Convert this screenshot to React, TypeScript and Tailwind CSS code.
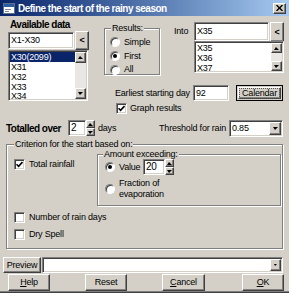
// App.tsx — Win2000-style dialog: "Define the start of the rainy season"

const sunken =
  "border border-t-[#808080] border-l-[#808080] border-b-white border-r-white shadow-[inset_1px_1px_0_#404040,inset_-1px_-1px_0_#d4d0c8] bg-white";
const raised =
  "border border-t-white border-l-white border-b-[#404040] border-r-[#404040] shadow-[inset_-1px_-1px_0_#808080] bg-[#d4d0c8]";
const groupBox =
  "border border-[#808080] shadow-[1px_1px_0_#fff,inset_1px_1px_0_#fff]";

const Arrow = ({ dir, size = 5 }: { dir: "up" | "down"; size?: number }) => (
  <svg width={size * 2 - 1} height={size} viewBox={`0 0 ${size * 2 - 1} ${size}`}>
    {dir === "up" ? (
      <polygon points={`${size - 1},0 ${size * 2 - 1},${size} 0,${size}`} fill="#000" />
    ) : (
      <polygon points={`0,0 ${size * 2 - 1},0 ${size - 1},${size}`} fill="#000" />
    )}
  </svg>
);

const ArrowBtn = ({ dir, className = "" }: { dir: "up" | "down"; className?: string }) => (
  <div className={`${raised} flex items-center justify-center ${className}`}>
    <Arrow dir={dir} size={3} />
  </div>
);

const Scrollbar = ({ btn }: { btn: string }) => (
  <div className="flex flex-col w-[11px] h-full">
    <ArrowBtn dir="up" className={btn} />
    <div className="flex-1 bg-[#e9e7e3]" />
    <ArrowBtn dir="down" className={btn} />
  </div>
);

const Check = ({ checked }: { checked?: boolean }) => (
  <div className={`${sunken} w-[11px] h-[11px] flex items-center justify-center shrink-0`}>
    {checked && (
      <svg width="7" height="7" viewBox="0 0 7 7">
        <path d="M0.5 3.2 L2.6 5.3 L6.5 1" stroke="#000" strokeWidth="1.6" fill="none" />
      </svg>
    )}
  </div>
);

const Radio = ({ on }: { on?: boolean }) => (
  <div className="w-[10px] h-[10px] rounded-full border border-t-[#808080] border-l-[#808080] border-b-white border-r-white bg-white shadow-[inset_1px_1px_0_#404040] flex items-center justify-center shrink-0">
    {on && <div className="w-[4px] h-[4px] rounded-full bg-black" />}
  </div>
);

const Spin = ({ value, w }: { value: string; w: string }) => (
  <div className="flex h-[16px]">
    <div className={`${sunken} ${w} h-[16px] pl-[2px] leading-[14px] text-[10px]`}>{value}</div>
    <div className="flex flex-col w-[9px] h-[16px]">
      <ArrowBtn dir="up" className="h-[8px]" />
      <ArrowBtn dir="down" className="h-[8px]" />
    </div>
  </div>
);

export default function App() {
  return (
    <div className="w-[289px] h-[293px] bg-[#d4d0c8] overflow-hidden flex flex-col text-[9px] tracking-[-0.2px] leading-[11px] whitespace-nowrap text-black font-['Liberation_Sans',Arial,sans-serif] border-b border-b-[#404040] shadow-[inset_0_-1px_0_#808080]">
      {/* title bar */}
      <div className="h-[16px] shrink-0 flex items-center bg-linear-to-r from-[#0a246a] to-[#a6caf0] pl-[3px]">
        <svg width="12" height="11" viewBox="0 0 12 11">
          <rect x="0.5" y="0.5" width="11" height="10" fill="#fff" stroke="#5a6f8a" />
          <rect x="1" y="1" width="10" height="3" fill="#2c5d9e" />
          <rect x="2" y="6" width="6" height="1" fill="#7b8ca0" />
          <rect x="2" y="8" width="4" height="1" fill="#7b8ca0" />
        </svg>
        <span className="ml-[3px] text-white font-bold text-[10px] tracking-[-0.5px]">Define the start of the rainy season</span>
        <div className={`${raised} ml-auto mr-[3px] w-[13px] h-[11px] flex items-center justify-center`}>
          <svg width="7" height="6" viewBox="0 0 7 6">
            <path d="M0.5 0 L6.5 6 M6.5 0 L0.5 6" stroke="#000" strokeWidth="1.4" />
          </svg>
        </div>
      </div>

      {/* data selection */}
      <div className="h-[102px] shrink-0 flex">
        <div className="ml-[8px] w-[81px] flex flex-col">
          <div className="h-[15px] pt-[3px] font-bold text-[10px] tracking-[-0.5px] leading-[12px] pl-[2px]">Available data</div>
          <div className="h-[19px] flex items-start">
            <div className={`${sunken} w-[66px] h-[17px] mt-[1px] pl-[2px] leading-[15px]`}>X1-X30</div>
            <div className={`${raised} ml-[1px] w-[14px] h-[19px] flex items-center justify-center font-bold`}>&lt;</div>
          </div>
          <div className={`${sunken} w-[80px] h-[51px] flex p-[1px]`}>
            <div className="flex-1 flex flex-col leading-[10px]">
              <div className="h-[10px] bg-[#0a246a] text-white pl-[1px]">X30(2099)</div>
              <div className="h-[10px] pl-[1px]">X31</div>
              <div className="h-[10px] pl-[1px]">X32</div>
              <div className="h-[10px] pl-[1px]">X33</div>
              <div className="h-[9px] pl-[1px] leading-[9px]">X34</div>
            </div>
            <Scrollbar btn="h-[11px]" />
          </div>
        </div>

        <div className="ml-[15px] w-[180px] flex flex-col">
          <div className="h-[59px] flex">
            <fieldset className={`${groupBox} mt-[6px] w-[56px] h-[53px]`}>
              <legend className="ml-[6px] px-[1px] bg-[#d4d0c8] leading-[12px]">Results:</legend>
              <div className="flex flex-col pl-[5px] pt-[1px]">
                <div className="h-[14px] flex items-center gap-[4px]"><Radio />Simple</div>
                <div className="h-[14px] flex items-center gap-[4px]"><Radio on />First</div>
                <div className="h-[13px] flex items-center gap-[4px]"><Radio />All</div>
              </div>
            </fieldset>
            <div className="ml-[14px] w-[110px] flex flex-col">
              <div className="mt-[6px] flex items-start">
                <div className="w-[20px] pt-[4px]">Into</div>
                <div className={`${sunken} w-[75px] h-[19px] pl-[2px] leading-[17px]`}>X35</div>
                <div className={`${raised} ml-[1px] w-[14px] h-[20px] flex items-center justify-center font-bold`}>&lt;</div>
              </div>
              <div className={`${sunken} ml-[20px] w-[90px] h-[32px] flex p-[1px] -mt-[1px]`}>
                <div className="flex-1 flex flex-col leading-[10px] pl-[1px]">
                  <div className="h-[10px]">X35</div>
                  <div className="h-[10px]">X36</div>
                  <div className="h-[10px]">X37</div>
                </div>
                <Scrollbar btn="h-[10px]" />
              </div>
            </div>
          </div>
          <div className="mt-[10px] h-[16px] flex items-center">
            <span className="ml-[11px] w-[78px]">Earliest starting day</span>
            <div className={`${sunken} w-[36px] h-[16px] pl-[2px] leading-[14px]`}>92</div>
            <div className="ml-[7px] w-[47px] h-[16px] border border-black p-[1px] bg-[#d4d0c8]">
              <div className={`${raised} w-full h-full flex items-center justify-center`}>
                <span className="outline outline-1 outline-dotted outline-[#555] px-[2px] leading-[9px]">Calendar</span>
              </div>
            </div>
          </div>
          <div className="mt-[1px] h-[13px] flex items-center">
            <div className="ml-[12px]"><Check checked /></div>
            <span className="ml-[3px]">Graph results</span>
          </div>
        </div>
      </div>

      {/* totalled / threshold */}
      <div className="h-[20px] shrink-0 flex items-center">
        <span className="ml-[6px] w-[62px] font-bold text-[10px] tracking-[-0.5px]">Totalled over</span>
        <Spin value="2" w="w-[18px]" />
        <span className="ml-[3px]">days</span>
        <span className="ml-auto">Threshold for rain</span>
        <div className={`${sunken} ml-[3px] mr-[6px] w-[54px] h-[17px] flex items-center p-[1px]`}>
          <span className="flex-1 pl-[1px]">0.85</span>
          <div className={`${raised} w-[12px] h-full flex items-center justify-center`}>
            <Arrow dir="down" size={3} />
          </div>
        </div>
      </div>

      {/* criterion */}
      <fieldset className={`${groupBox} mx-[6px] h-[111px] shrink-0`}>
        <legend className="ml-[7px] px-[1px] bg-[#d4d0c8] leading-[12px]">Criterion for the start based on:</legend>
        <div className="flex">
          <div className="w-[90px] pl-[7px] pt-[9px]">
            <div className="flex items-center gap-[4px]">
              <Check checked />
              <span>Total rainfall</span>
            </div>
          </div>
          <fieldset className={`${groupBox} w-[184px] h-[57px] -mt-[1px]`}>
            <legend className="ml-[5px] px-[1px] bg-[#d4d0c8] leading-[10px]">Amount exceeding:</legend>
            <div className="pl-[7px] flex flex-col">
              <div className="h-[16px] flex items-center">
                <Radio on />
                <span className="ml-[4px] w-[24px]">Value</span>
                <Spin value="20" w="w-[22px]" />
              </div>
              <div className="mt-[3px] flex items-center">
                <Radio />
                <span className="ml-[4px] leading-[11px]">Fraction of<br />evaporation</span>
              </div>
            </div>
          </fieldset>
        </div>
        <div className="pl-[7px] mt-[6px] flex flex-col gap-[6px]">
          <div className="h-[11px] flex items-center gap-[4px]"><Check /><span>Number of rain days</span></div>
          <div className="h-[11px] flex items-center gap-[4px]"><Check /><span>Dry Spell</span></div>
        </div>
      </fieldset>

      {/* preview */}
      <div className="mt-[8px] h-[16px] shrink-0 flex">
        <div className={`${raised} ml-[3px] w-[38px] h-[16px] flex items-center justify-center`}>Preview</div>
        <div className={`${sunken} ml-[1px] mr-[6px] flex-1 h-[16px] flex justify-end p-[1px]`}>
          <div className={`${raised} w-[11px] h-full flex items-center justify-center`}>
            <Arrow dir="down" size={2} />
          </div>
        </div>
      </div>

      {/* buttons */}
      <div className="mt-[1px] h-[17px] shrink-0 flex">
        <div className={`${raised} ml-[8px] w-[42px] h-[17px] flex items-center justify-center`}><span><u>H</u>elp</span></div>
        <div className={`${raised} ml-[35px] w-[42px] h-[17px] flex items-center justify-center`}>Reset</div>
        <div className={`${raised} ml-[35px] w-[43px] h-[17px] flex items-center justify-center`}><span><u>C</u>ancel</span></div>
        <div className={`${raised} ml-[37px] w-[42px] h-[17px] flex items-center justify-center`}><span><u>O</u>K</span></div>
      </div>
    </div>
  );
}
